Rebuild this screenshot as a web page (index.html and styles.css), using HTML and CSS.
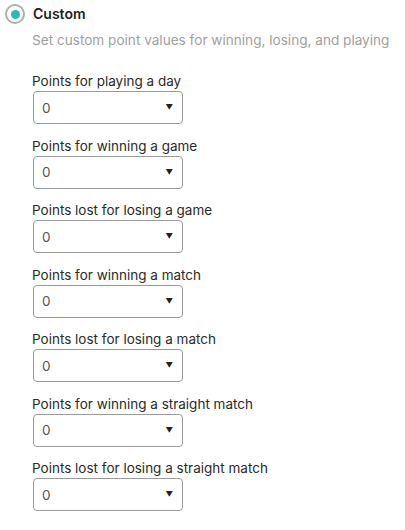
FILE: index.html
```html
<!DOCTYPE html>
<html>
<head>
<meta charset="utf-8">
<link rel="stylesheet" href="styles.css">
</head>
<body>
<div class="option">
  <div class="option-head">
    <span class="radio"><span class="radio-dot"></span></span>
    <span class="option-title">Custom</span>
  </div>
  <div class="option-desc">Set custom point values for winning, losing, and playing</div>
  <div class="fields">
    <div class="field"><div class="label">Points for playing a day</div><div class="select"><span>0</span><span class="caret">▼</span></div></div>
    <div class="field"><div class="label">Points for winning a game</div><div class="select"><span>0</span><span class="caret">▼</span></div></div>
    <div class="field"><div class="label">Points lost for losing a game</div><div class="select"><span>0</span><span class="caret">▼</span></div></div>
    <div class="field"><div class="label">Points for winning a match</div><div class="select"><span>0</span><span class="caret">▼</span></div></div>
    <div class="field"><div class="label">Points lost for losing a match</div><div class="select"><span>0</span><span class="caret">▼</span></div></div>
    <div class="field"><div class="label">Points for winning a straight match</div><div class="select"><span>0</span><span class="caret">▼</span></div></div>
    <div class="field"><div class="label">Points lost for losing a straight match</div><div class="select"><span>0</span><span class="caret">▼</span></div></div>
  </div>
</div>
</body>
</html>
```
FILE: styles.css
```css
html, body { margin: 0; padding: 0; background: #fff; }
body {
  font-family: Inter, "Noto Sans", sans-serif;
  font-size: 13.5px;
  color: #222;
}
.option { padding: 4px 0 0 5px; }
.option-head { display: flex; align-items: center; gap: 8px; height: 20px; }
.radio {
  width: 20px; height: 20px; box-sizing: border-box;
  border: 2px solid #a9b0b8; border-radius: 50%;
  display: flex; align-items: center; justify-content: center;
}
.radio-dot { width: 9px; height: 9px; border-radius: 50%; background: #26bdb3; }
.option-title { font-weight: 600; font-size: 14px; color: #1e1e1e; line-height: 20px; }
.option-desc { margin: 6px 0 0 27px; color: #a0a0a0; font-size: 13.6px; line-height: 20px; }
.fields { margin: 21px 0 0 27px; display: flex; flex-direction: column; gap: 11.5px; }
.field { display: flex; flex-direction: column; }
.label { line-height: 20px; color: #2a2a2a; }
.select {
  width: 150px; height: 33px; box-sizing: border-box;
  border: 1px solid #9a9a9a; border-radius: 4px;
  display: flex; align-items: center; justify-content: space-between;
  padding: 0 9px 0 8px; color: #555; margin-left: 1px;
}
.caret { font-size: 7.5px; color: #222; }
```
